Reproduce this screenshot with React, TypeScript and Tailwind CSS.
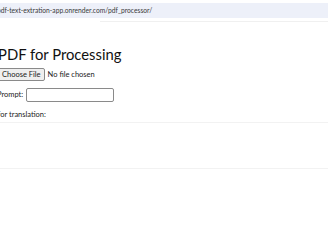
export default function App() {
  return (
    <div className="w-[328px] h-[240px] bg-white overflow-hidden relative" style={{ fontFamily: 'Lato, "Open Sans", sans-serif' }}>
      <div className="h-[3px]" />
      <div className="h-[15px] bg-[#edf0f9] flex items-center text-[6.7px] text-[#3a3a3a]">
        <span className="-ml-[3px] whitespace-nowrap">pdf-text-extration-app.onrender.com/pdf_processor/</span>
      </div>
      <div className="h-[3px]" />
      <div className="h-[1px] ml-[100px] bg-[#f0f0f0]" />
      <div className="-ml-[2px]">
        <div className="h-[23px]" />
        <h1 className="text-[14.8px] leading-[18px] text-[#111] whitespace-nowrap">PDF for Processing</h1>
        <div className="h-[5px]" />
        <div className="flex items-center gap-[3px] h-[13px] text-[7.5px] text-[#222]">
          <div className="h-[13px] px-[3px] border border-[#8a8a8a] bg-[#efefef] rounded-[2px] flex items-center">Choose File</div>
          <span>No file chosen</span>
        </div>
        <div className="h-[7px]" />
        <div className="-ml-[1px] flex items-center gap-[3px] text-[7.5px] text-[#222]">
          <span>Prompt:</span>
          <div className="w-[88px] h-[14px] border border-[#8a8a8a] rounded-[2px] bg-white" />
        </div>
        <div className="h-[8px]" />
        <div className="-ml-[16px] text-[7.5px] text-[#222] leading-[10px] whitespace-nowrap">Text for translation:</div>
      </div>
      <div className="h-[2px]" />
      <div className="h-[47px] border-t border-b border-[#f2f2f2]" />
    </div>
  );
}
